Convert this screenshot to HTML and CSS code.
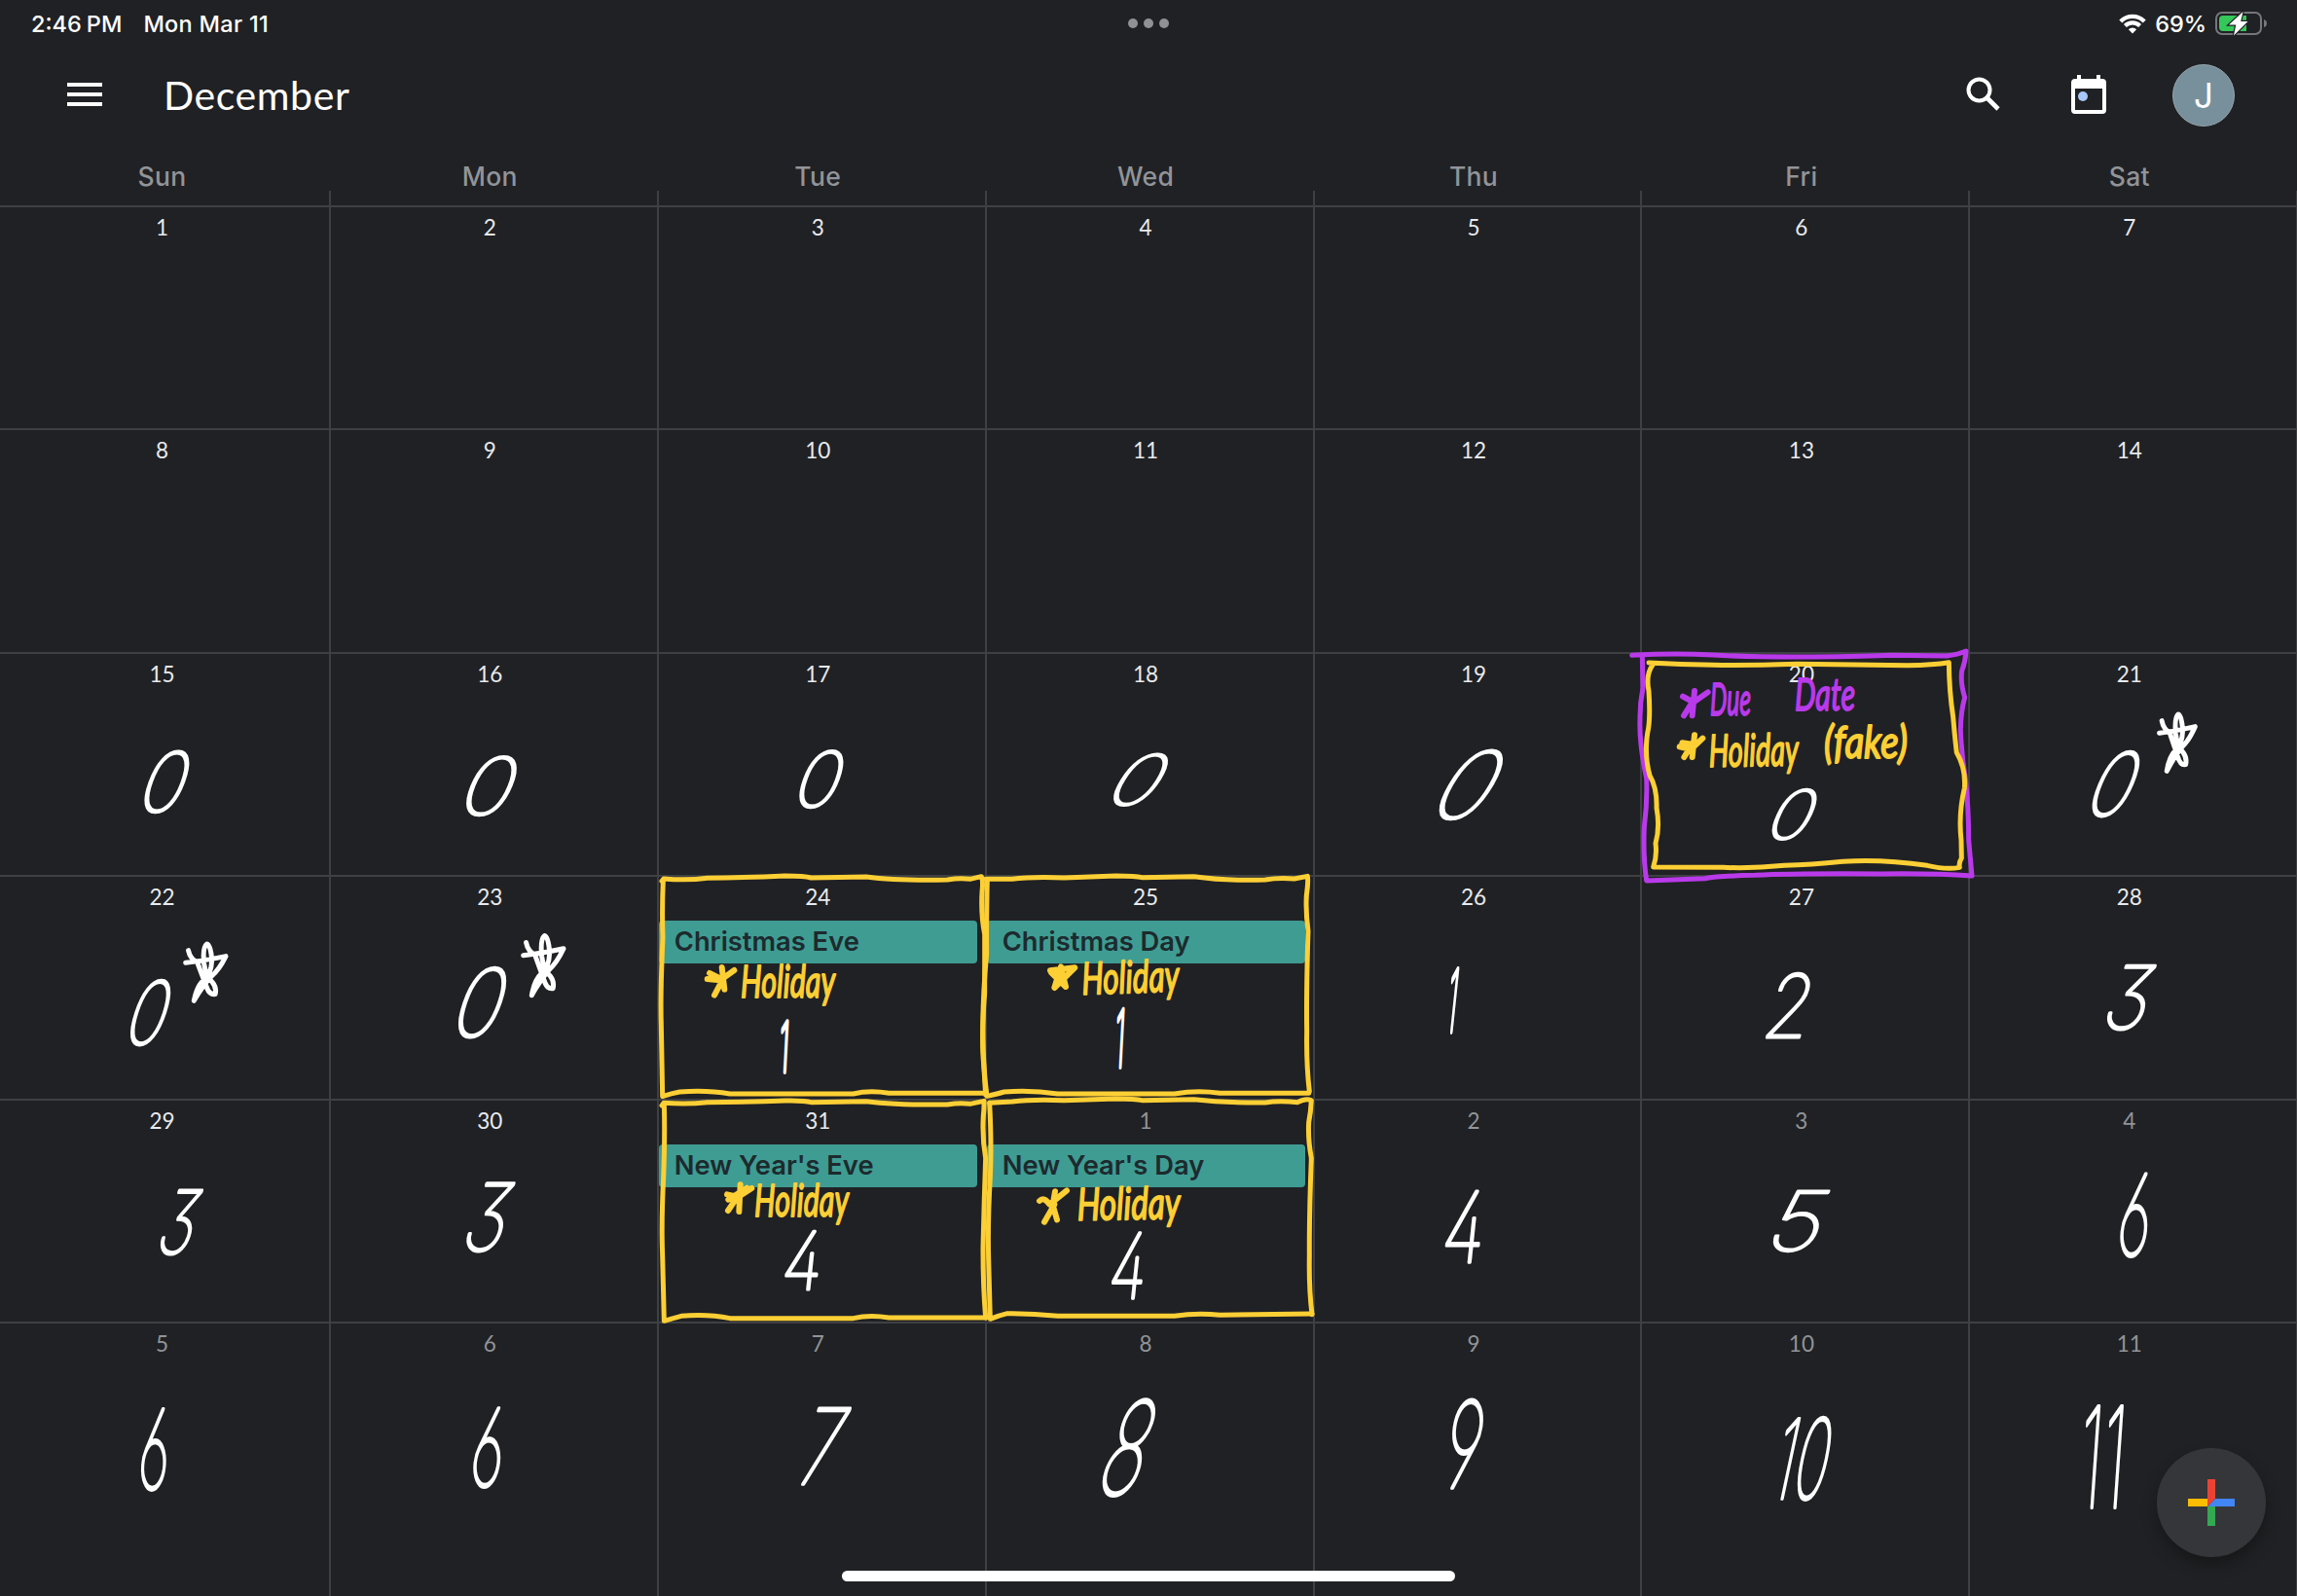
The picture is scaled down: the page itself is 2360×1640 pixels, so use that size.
FILE: index.html
```html
<!DOCTYPE html>
<html lang="en">
<head>
<meta charset="utf-8">
<title>December</title>
<link rel="stylesheet" href="styles.css">
</head>
<body>
<div class="screen">
  <div class="status">
    <div class="status-left"><span class="time">2:46<i></i>PM</span><span class="today">Mon Mar 11</span></div>
    <div class="dots"><i></i><i></i><i></i></div>
    <div class="status-right">
      <svg class="wifi" width="28" height="21" viewBox="0 0 28 21"><g fill="none" stroke="#fff" stroke-width="4.2"><path d="M1.8 8a17.2 17.2 0 0 1 24.4 0"/><path d="M6.4 12.6a10.8 10.8 0 0 1 15.2 0"/></g><path d="M14 20.5l-4.1-4.2a5.8 5.8 0 0 1 8.2 0z" fill="#fff"/></svg>
      <span class="percent">69%</span>
      <svg class="battery" width="54" height="26" viewBox="0 0 54 26"><rect x="1" y="2" width="46" height="22" rx="6" fill="none" stroke="#76777a" stroke-width="2"/><path d="M50 9v8q3-1 3-4t-3-4z" fill="#76777a"/><path d="M8 5H32V21H8a4 4 0 0 1-4-4V9a4 4 0 0 1 4-4z" fill="#34c759"/><path d="M28.500 1L14 14.500h7.300L19 25.500 33.500 11h-7.300z" fill="#fff" stroke="#202124" stroke-width="2.400" paint-order="stroke"/></svg>
    </div>
  </div>
  <header class="bar">
    <div class="menu"><i></i><i></i><i></i></div>
    <h1>December</h1>
    <svg class="search" width="36" height="36" viewBox="0 0 36 36" fill="none" stroke="#fff" stroke-width="4"><circle cx="13.500" cy="13.500" r="11"/><path d="M21.500 21.500L33 33" stroke-width="4.600"/></svg>
    <svg class="cal" width="36" height="40" viewBox="0 0 36 40"><path fill="#fff" fill-rule="evenodd" d="M6 0h4v4h16V0h4v4h2a4 4 0 0 1 4 4v28a4 4 0 0 1-4 4H4a4 4 0 0 1-4-4V8a4 4 0 0 1 4-4h2zM4 14v22h28V14z"/><circle cx="12" cy="22" r="5" fill="#a8c7fa"/></svg>
    <div class="avatar">J</div>
  </header>
  <div class="weekdays"><span>Sun</span><span>Mon</span><span>Tue</span><span>Wed</span><span>Thu</span><span>Fri</span><span>Sat</span></div>
  <main class="month">
    <div class="day">1</div><div class="day">2</div><div class="day">3</div><div class="day">4</div><div class="day">5</div><div class="day">6</div><div class="day">7</div>
    <div class="day">8</div><div class="day">9</div><div class="day">10</div><div class="day">11</div><div class="day">12</div><div class="day">13</div><div class="day">14</div>
    <div class="day">15</div><div class="day">16</div><div class="day">17</div><div class="day">18</div><div class="day">19</div><div class="day">20</div><div class="day">21</div>
    <div class="day">22</div><div class="day">23</div><div class="day">24<p class="event">Christmas Eve</p></div><div class="day">25<p class="event">Christmas Day</p></div><div class="day">26</div><div class="day">27</div><div class="day">28</div>
    <div class="day">29</div><div class="day">30</div><div class="day">31<p class="event">New Year's Eve</p></div><div class="day next">1<p class="event">New Year's Day</p></div><div class="day next">2</div><div class="day next">3</div><div class="day next">4</div>
    <div class="day next">5</div><div class="day next">6</div><div class="day next">7</div><div class="day next">8</div><div class="day next">9</div><div class="day next">10</div><div class="day next">11</div>
  </main>

  <svg class="ink" width="2360" height="1640" viewBox="0 0 2360 1640">
    <defs>
      <path id="star" d="M163 770Q166 796 180 808M158 808Q190 802 230 788Q218 830 204 850Q188 880 173 925Q178 880 190 862Q204 845 205 800Q203 752 196 750Q188 760 191 810Q194 850 206 868Q214 885 211 905Q200 908 195 880L180 812"/>
    </defs>
    <g class="frame purple" transform="translate(1660 650) scale(.33333)">
      <path d="M50 70Q180 62 300 69T600 75T850 70L1020 72Q1055 68 1080 57Q1078 90 1067 118Q1062 155 1076 200Q1064 240 1063 300Q1066 380 1078 450Q1088 540 1088 640L1098 750Q980 742 820 744Q560 742 430 748Q320 750 275 758L95 765Q84 690 88 600Q98 520 95 450Q72 340 75 270Q74 220 84 170L82 75"/>
      <path class="mark" d="M207 197L240 215L284 184M243 180L236 256M210 256L236 215"/>
    </g>
    <g class="frame yellow" transform="translate(1660 650) scale(.33333)">
      <path d="M102 93Q200 98 300 100T560 97L900 101Q980 100 1027 92Q1028 180 1040 260Q1045 320 1051 370Q1080 420 1075 480Q1056 560 1065 640L1066 695Q1057 710 1060 724Q1020 732 960 718Q820 698 700 706Q600 716 520 718Q420 728 330 724L116 723Q128 690 123 650Q137 600 126 540Q128 480 105 440Q88 380 98 310Q108 270 102 180Q92 130 114 100"/>
      <path class="mark" d="M197 352L232 360L268 326M243 316L236 384M211 384L232 350M205 340L240 345"/>
    </g>
    <g class="frame yellow" transform="translate(660 880) scale(.33333)">
      <path d="M60 76L66 69Q140 75 200 67Q330 65 440 60Q500 60 520 66L690 63Q780 75 940 72Q980 65 1010 70L1045 62Q1051 76 1047 110Q1043 180 1055 240V420Q1044 560 1052 640L1058 735"/>
      <path d="M64 75Q60 170 63 250Q55 420 58 520L62 740Q90 730 115 726Q200 720 270 732L650 732Q700 720 760 730H1060"/>
      <path class="mark" d="M200 378L240 382L283 351M245 342L253 410M222 428L250 375M207 360L240 376"/>
    </g>
    <g class="frame yellow" transform="translate(1000 880) scale(.33333)">
      <path d="M38 70H120Q180 62 280 66L440 60Q500 60 520 65L680 62Q780 76 900 72Q940 65 990 69L1030 61Q1033 76 1027 120Q1024 170 1032 230Q1026 420 1028 540Q1026 640 1036 725"/>
      <path d="M43 72Q40 200 41 300Q28 440 30 550Q30 650 42 739Q75 732 95 726Q180 720 260 732L620 732Q690 720 760 730H1034"/>
      <path class="mark" d="M237 352L313 343L250 405L270 340L285 402L240 358"/>
    </g>
    <g class="frame yellow" transform="translate(660 1110) scale(.33333)">
      <path d="M60 78L66 70Q140 75 200 68Q330 68 440 63Q500 62 520 68L690 65Q780 77 940 75Q980 68 1010 73L1053 64Q1054 80 1051 110Q1047 180 1058 240Q1053 380 1050 520Q1050 640 1058 732"/>
      <path d="M67 72Q70 170 65 300Q58 440 62 540L67 742Q90 735 120 727Q200 720 270 734L650 734Q700 722 760 732H1060"/>
      <path class="mark" d="M261 352L295 360L337 333M302 322L298 405M264 402L298 352M265 368L322 332"/>
    </g>
    <g class="frame yellow" transform="translate(1000 1110) scale(.33333)">
      <path d="M50 70L120 66Q180 58 280 62L440 57Q500 57 520 62L680 59Q780 70 900 69Q940 62 1000 68Q1025 54 1042 62Q1040 100 1034 130Q1031 180 1042 240Q1035 420 1036 540Q1034 640 1044 722"/>
      <path d="M50 70Q57 200 52 300Q44 440 47 550L52 736Q80 725 105 719Q180 718 260 727L620 727Q690 716 760 724L1044 720"/>
      <path class="mark" d="M204 372Q218 358 235 383L288 340M252 343L245 385L258 430M219 437L250 383"/>
    </g>

    <g class="stars">
      <use href="#star" transform="translate(100 720) scale(.574 .3333)"/>
      <use href="#star" transform="translate(447 699) scale(.574 .35)"/>
      <use href="#star" transform="translate(2138 484) scale(.51 .3333)"/>
    </g>

    <g class="words yellow">
      <text transform="translate(761 1025)" textLength="97" lengthAdjust="spacingAndGlyphs">Holiday</text>
      <text transform="translate(1112 1022) rotate(-2)" textLength="100" lengthAdjust="spacingAndGlyphs">Holiday</text>
      <text transform="translate(775 1250)" textLength="97" lengthAdjust="spacingAndGlyphs">Holiday</text>
      <text transform="translate(1107 1254) rotate(-1)" textLength="106" lengthAdjust="spacingAndGlyphs">Holiday</text>
      <text transform="translate(1756 788) rotate(-1)" textLength="92" lengthAdjust="spacingAndGlyphs">Holiday</text>
      <text transform="translate(1874 779)" textLength="86" lengthAdjust="spacingAndGlyphs">(fake)</text>
    </g>
    <g class="words purple">
      <text transform="translate(1757 735)" textLength="42" lengthAdjust="spacingAndGlyphs">Due</text>
      <text transform="translate(1844 730)" textLength="62" lengthAdjust="spacingAndGlyphs">Date</text>
    </g>

    <g class="digits">
      <text y="36.400" transform="translate(171.500 803.500) skewX(-20) scale(.78 .84)">0</text>
      <text y="36.400" transform="translate(505 808) skewX(-22) scale(.9 .81)">0</text>
      <text y="36.400" transform="translate(844 801) skewX(-20) scale(.78 .78)">0</text>
      <text y="36.400" transform="translate(1172 801.500) skewX(-32) scale(.86 .71)">0</text>
      <text y="36.400" transform="translate(1511.500 806) skewX(-30) scale(.98 .95)">0</text>
      <text y="36.400" transform="translate(1843.500 836.500) skewX(-25) scale(.75 .69)">0</text>
      <text y="36.400" transform="translate(2174 806) skewX(-23) scale(.76 .89)">0</text>
      <text y="36.400" transform="translate(154.500 1041) skewX(-18) scale(.68 .89)">0</text>
      <text y="36.400" transform="translate(495.500 1030) skewX(-19) scale(.84 .96)">0</text>
      <g class="ones">
        <text y="36.400" transform="translate(806 1075.500) skewX(-3) scale(.28 .7)">1</text>
        <text y="36.400" transform="translate(1151 1067) skewX(-3) scale(.28 .8)">1</text>
        <text y="36.400" transform="translate(1493 1028) skewX(-6) scale(.28 .88)">1</text>
      </g>
      <text y="36.400" transform="translate(1840 1034) skewX(-14) scale(.76 .89)">2</text>
      <text y="36.400" transform="translate(2189 1024.500) skewX(-17) scale(.78 .89)">3</text>
      <text y="36.400" transform="translate(185.500 1255.500) skewX(-17) scale(.62 .89)">3</text>
      <text y="36.400" transform="translate(503 1250.500) skewX(-17) scale(.74 .95)">3</text>
      <text y="36.400" transform="translate(825 1295) skewX(-6) scale(.7 .82)">4</text>
      <text y="36.400" transform="translate(1159.500 1301) skewX(-6) scale(.65 .92)">4</text>
      <text y="36.400" transform="translate(1504.500 1261) skewX(-6) scale(.74 1)">4</text>
      <text y="36.400" transform="translate(1849.500 1254) skewX(-20) scale(.98 .84)">5</text>
      <text y="36.400" transform="translate(2194 1248.500) skewX(-6) scale(.6 1.150)">6</text>
      <text y="36.400" transform="translate(159 1488.500) skewX(-4) scale(.56 1.130)">6</text>
      <text y="36.400" transform="translate(502 1486.500) skewX(-6) scale(.6 1.100)">6</text>
      <text y="36.400" transform="translate(847 1486.500) skewX(-15) scale(.77 1.070)">7</text>
      <text y="36.400" transform="translate(1160.500 1488) skewX(-18) scale(.75 1.330)">8</text>
      <text y="36.400" transform="translate(1505.500 1484.500) skewX(-8) scale(.68 1.230)">9</text>
      <text y="36.400" transform="translate(1853.500 1498.500) skewX(-12) scale(.58 1.130)">10</text>
      <text y="36.400" transform="translate(2161 1496.500) skewX(-4) scale(.65 1.430)">11</text>
    </g>
  </svg>

  <div class="fab"><svg width="48" height="48" viewBox="0 0 48 48"><path fill="#fbbc04" d="M0 20h20v8H0z"/><path fill="#4285f4" d="M28 20h20v8H20z"/><path fill="#ea4335" d="M20 0h8v20l-8 8z"/><path fill="#34a853" d="M20 28h8v20h-8z"/></svg></div>
  <div class="home"></div>
</div>
</body>
</html>
```

FILE: styles.css
```css
* { box-sizing: border-box; }
body { margin: 0; background: #202124; }
.screen {
  position: relative; width: 2360px; height: 1640px; overflow: hidden;
  background: #202124; color: #fff; font-family: Inter, "Liberation Sans", sans-serif;
}
.status {
  display: grid; grid-template-columns: 1fr auto 1fr; align-items: center;
  height: 48px; padding: 0 30px 0 32px; font-size: 23.500px; font-weight: 500;
}
.status-left { display: flex; gap: 22px; white-space: nowrap; }
.time i { display: inline-block; width: 5px; }
.time { letter-spacing: 0; }
.today { letter-spacing: 0.3px; }
.dots { display: flex; gap: 6px; }
.dots i { width: 10px; height: 10px; border-radius: 50%; background: #909194; }
.dots { margin-left: -3px; }
.status-right { display: flex; justify-content: flex-end; align-items: center; }
.percent { margin: 0 9px 0 9px; letter-spacing: -0.1px; }

.bar { display: flex; align-items: center; height: 100px; padding: 0 64px 0 69px; }
.menu { display: grid; gap: 6px; width: 36px; margin-right: 63px; margin-top: -2px; }
.menu i { height: 4px; background: #fff; }
h1 { flex: 1; margin: 0; font: 400 41px/50px Lato, sans-serif; letter-spacing: 0.6px; }
.search { margin-right: 72px; margin-top: -2px; }
.cal { margin-right: 68px; margin-top: -2px; }
.avatar {
  width: 64px; height: 64px; border: 1px solid #93a5ad; border-radius: 50%; background: #78909c;
  font: 400 35px/62px Inter, sans-serif; text-align: center;
}

.weekdays, .month { display: grid; grid-template-columns: repeat(7, 336.900px); padding-left: 3px; }
.weekdays {
  height: 63px; padding-top: 17px; color: #919498; font-size: 26.500px; line-height: 32px; font-weight: 500;
  text-align: center;
}
.weekdays span { position: relative; padding-right: 10px; letter-spacing: 0.3px; }
.weekdays span::after {
  content: ""; position: absolute; right: 0; top: 31px; width: 2px; height: 15px; background: #3c4043;
}
.month { grid-template-rows: repeat(5, 229.400px) 290px; }
.day {
  border-top: 2px solid #3e4043; border-right: 2px solid #3e4043; padding: 7px 8px 0 0;
  font: 400 22.500px/28px Lato, sans-serif; color: #e8eaed; text-align: center;
}
.day:nth-child(7n+1) { margin-left: -3px; padding-left: 3px; }
.next { color: #919498; }
.event {
  height: 44px; margin: 10px 0 0; padding-left: 16px; border-radius: 4px;
  background: #3f9c93; color: #1d2a2d; text-align: left;
  font: 600 27.300px/44px Inter, sans-serif;
}

/* Pen annotations lie over the whole calendar */
.ink { position: absolute; inset: 0; }
.frame, .stars { fill: none; stroke-linecap: round; stroke-linejoin: round; }
.frame { stroke-width: 15; }
.mark { stroke-width: 18; }
.frame.yellow { stroke: #fccf35; }
.frame.purple { stroke: #b93aea; }
.stars { stroke: #fff; stroke-width: 5; }
#star { vector-effect: non-scaling-stroke; }
.words { font: italic 400 46px Lato, sans-serif; stroke-width: 1.800; stroke-linejoin: round; }
.words.yellow { fill: #fccf35; stroke: #fccf35; }
.words.purple { fill: #b93aea; stroke: #b93aea; }
.digits {
  font: 100 100px Inter, sans-serif; font-feature-settings: "cv02", "cv03", "cv04", "cv09";
  fill: #fff; text-anchor: middle; stroke: #fff; stroke-width: 3; stroke-linejoin: round;
}
.digits text { vector-effect: non-scaling-stroke; }
.ones { stroke-width: 4.500; }

.fab {
  position: absolute; left: 2216px; top: 1488px; width: 112px; height: 112px; border-radius: 50%;
  display: grid; place-items: center; background: #35363a; box-shadow: 0 8px 16px rgba(0, 0, 0, 0.3);
}
.home {
  position: absolute; left: 865px; top: 1614px; width: 630px; height: 11px; border-radius: 6px; background: #fff;
}
```
